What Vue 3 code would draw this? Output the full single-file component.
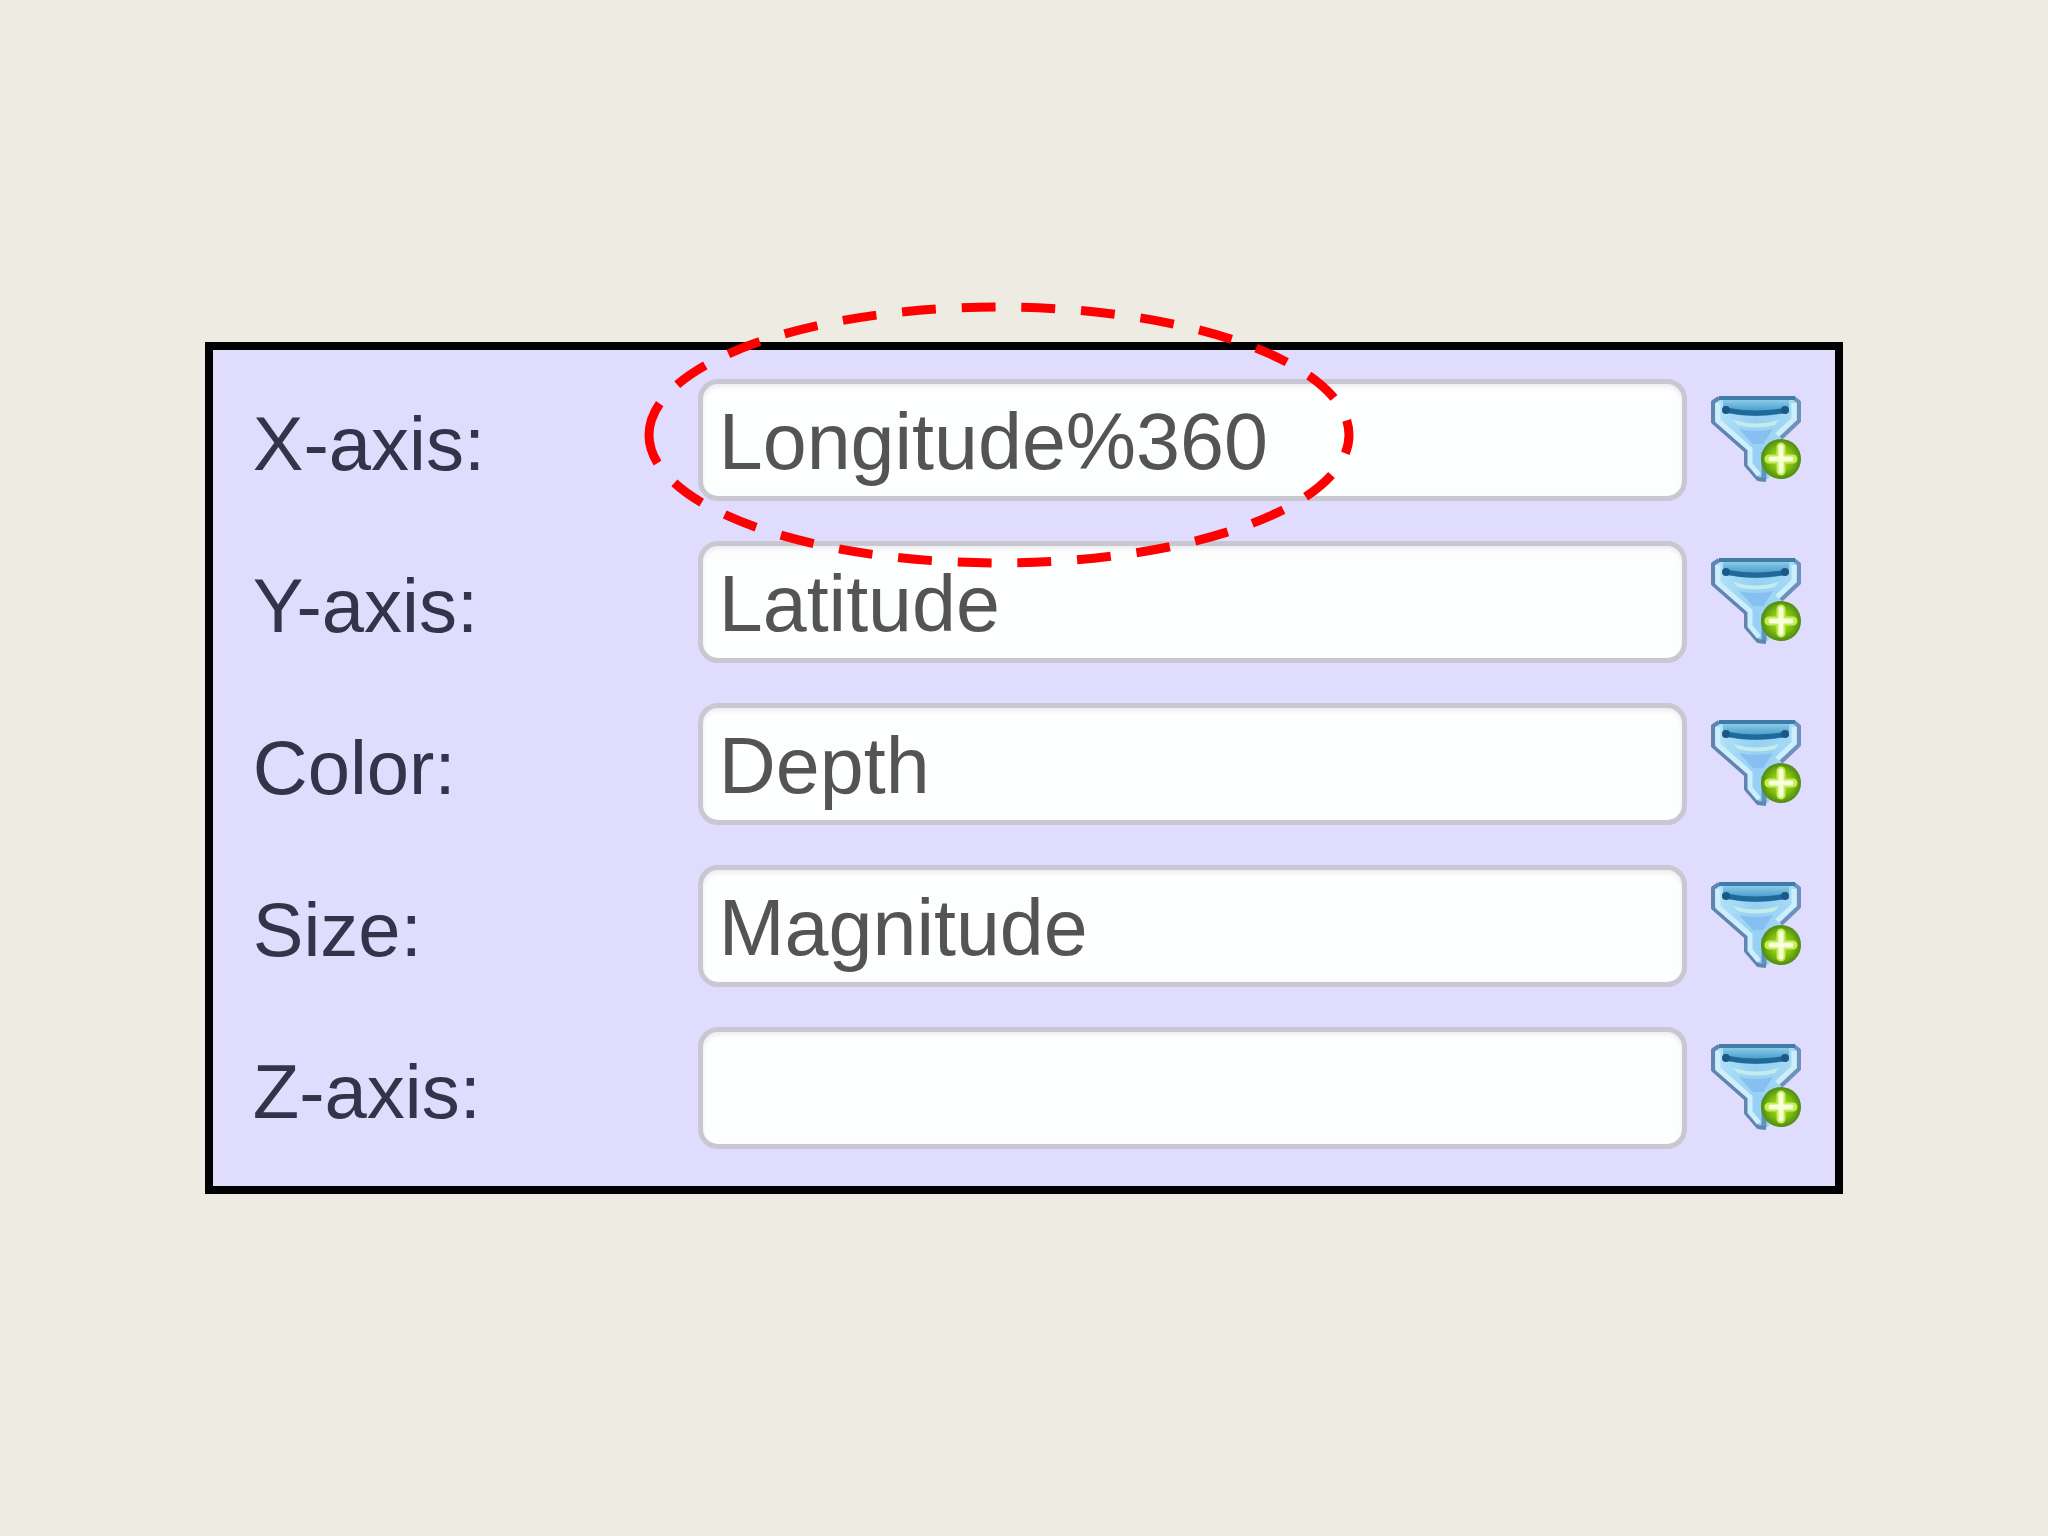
<script setup>
import { ref } from 'vue'

const fields = ref([
  { id: 'x-axis', label: 'X-axis:', value: 'Longitude%360', marked: true },
  { id: 'y-axis', label: 'Y-axis:', value: 'Latitude' },
  { id: 'color', label: 'Color:', value: 'Depth' },
  { id: 'size', label: 'Size:', value: 'Magnitude' },
  { id: 'z-axis', label: 'Z-axis:', value: '' }
])
</script>

<template>
  <main class="slide">
    <svg class="defs" width="0" height="0" aria-hidden="true">
      <defs>
        <linearGradient id="funnel" x1="0" y1="0" x2="1" y2="0">
          <stop offset="0" stop-color="#b4e3f8" />
          <stop offset="0.5" stop-color="#96d0f4" />
          <stop offset="1" stop-color="#a9dcf5" />
        </linearGradient>
        <linearGradient id="band" x1="0" y1="0" x2="0" y2="1">
          <stop offset="0" stop-color="#8ccbe9" />
          <stop offset="0.5" stop-color="#5aaad2" />
          <stop offset="1" stop-color="#3c8dbd" />
        </linearGradient>
        <radialGradient id="badge">
          <stop offset="0" stop-color="#b4e62c" />
          <stop offset="0.6" stop-color="#7fbd10" />
          <stop offset="1" stop-color="#4f8a12" />
        </radialGradient>
      </defs>
    </svg>
    <form class="panel" @submit.prevent>
      <div v-for="field in fields" :key="field.id" class="row">
        <label :for="field.id">{{ field.label }}</label>
        <div class="field">
          <input :id="field.id" v-model="field.value" type="text" spellcheck="false" autocomplete="off" />
          <svg v-if="field.marked" class="marker" viewBox="0 0 710 266" aria-hidden="true">
            <path d="M5 133A350 128 0 0 1 705 133A350 128 0 0 1 5 133" pathLength="1590" />
          </svg>
        </div>
        <button type="button" aria-label="Add filter">
          <svg viewBox="0 0 90 88" aria-hidden="true">
            <path d="M4 2H86L88 6V25L58 53V82L50 86L35 72V54L2 26V6Z" fill="url(#funnel)" />
            <path d="M8 2L2 6V26L35 55V69L47 83L55 84" fill="none" stroke="#6284b0" stroke-width="4" stroke-linejoin="round" />
            <path d="M83 2L88 6V25L70 42" fill="none" stroke="#6f90bb" stroke-width="4" stroke-linejoin="round" />
            <path d="M7 7V25L39 53V68L48 79" fill="none" stroke="#cdeefb" stroke-width="5" />
            <path d="M83 7V23L66 39" fill="none" stroke="#cdeefb" stroke-width="5" />
            <path d="M8 2H84" stroke="#3f7ca8" stroke-width="4" />
            <path d="M12 4H78V16Q45 24 12 16Z" fill="url(#band)" />
            <path d="M14 14Q45 20 76 14" fill="none" stroke="#20699a" stroke-width="5" />
            <circle cx="15" cy="14" r="4" fill="#1c5786" />
            <circle cx="74" cy="14" r="4" fill="#1c5786" />
            <path d="M22 24Q45 31 68 24L64 29Q45 34 27 29Z" fill="#c4ecea" />
            <path d="M28 33Q45 37 62 33L52 48H42Z" fill="#86bff0" />
            <path d="M53 56V82" stroke="#5f94ba" stroke-width="5" />
            <circle cx="70" cy="63" r="20" fill="url(#badge)" />
            <path d="M70 51V75M58 63H82" stroke="#c3ee52" stroke-width="9" stroke-linecap="round" />
            <path d="M70 51V75M60 63H80" stroke="#f8ffdc" stroke-width="5" stroke-linecap="round" />
          </svg>
        </button>
      </div>
    </form>
  </main>
</template>

<style>
body {
  margin: 0;
}
</style>

<style scoped>
.slide {
  box-sizing: border-box;
  min-height: 100vh;
  display: flex;
  align-items: center;
  justify-content: center;
  background: #eeebe3;
  font-family: "Liberation Sans", Arial, sans-serif;
}

.defs {
  position: absolute;
}

.panel {
  box-sizing: border-box;
  width: 80%;
  display: flex;
  flex-direction: column;
  gap: 40px;
  padding: 29px 34px 37px 40px;
  border: 8px solid #000;
  background: #dfdcfe;
}

.row {
  display: flex;
  align-items: center;
}

label {
  flex: 0 0 445px;
  padding-top: 8px;
  font-size: 76px;
  line-height: 88px;
  color: #33334a;
}

.field {
  position: relative;
  flex: 1;
  min-width: 0;
}

input {
  display: block;
  box-sizing: border-box;
  width: 100%;
  height: 122px;
  margin: 0;
  padding: 4px 16px 0;
  border: 5px solid #c9c8d2;
  border-radius: 20px;
  outline: none;
  background: #fdfefe;
  box-shadow: inset 0 3px 4px #ededf0;
  font-family: inherit;
  font-size: 79px;
  color: #545456;
}

.marker {
  position: absolute;
  z-index: 1;
  left: -54px;
  top: -77px;
  width: 710px;
  height: 266px;
  pointer-events: none;
}

.marker path {
  fill: none;
  stroke: #fe0000;
  stroke-width: 9px;
  stroke-dasharray: 34 26;
}

button {
  flex: none;
  display: block;
  width: 90px;
  height: 88px;
  margin-left: 24px;
  padding: 0;
  border: 0;
  background: none;
  cursor: pointer;
}

button svg {
  display: block;
  width: 100%;
  height: 100%;
}
</style>
